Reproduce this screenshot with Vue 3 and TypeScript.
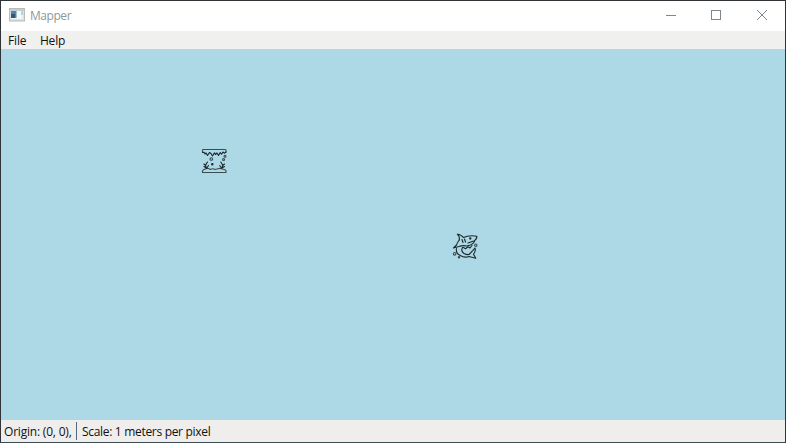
<script setup lang="ts">
import { ref } from 'vue'

interface Marker {
  kind: 'cave' | 'shark'
  x: number
  y: number
}

const menus: string[] = ['File', 'Help']
const origin = ref<[number, number]>([0, 0])
const scale = ref<number>(1)
const markers: Marker[] = [
  { kind: 'cave', x: 200, y: 99 },
  { kind: 'shark', x: 451, y: 184 },
]
</script>

<template>
  <div class="window">
    <header class="titlebar">
      <svg class="app-icon" width="16" height="14" viewBox="0 0 16 14">
        <rect x="0.5" y="0.5" width="15" height="12.5" fill="#dce1e0" stroke="#b4bcbd" />
        <rect x="1" y="1" width="14" height="2" fill="#c5cfd0" />
        <rect x="2" y="3" width="10" height="8" fill="#f5f8f8" />
        <rect x="2" y="3" width="5" height="7" fill="#5684a2" />
        <rect x="2" y="6" width="4" height="4" fill="#31597d" />
        <rect x="7" y="3" width="1" height="7" fill="#9dc2cf" />
        <rect x="12" y="3" width="2" height="4" fill="#b8d4d8" />
        <rect x="12" y="7" width="2" height="4" fill="#edf0ec" />
      </svg>
      <span class="title">Mapper</span>
      <div class="controls">
        <button aria-label="Minimize">
          <svg width="10" height="10" viewBox="0 0 10 10"><path d="M0 5.5H10" /></svg>
        </button>
        <button aria-label="Maximize">
          <svg width="10" height="10" viewBox="0 0 10 10"><rect x=".5" y=".5" width="9" height="9" /></svg>
        </button>
        <button aria-label="Close">
          <svg width="10" height="10" viewBox="0 0 10 10"><path d="M0 0L10 10M10 0L0 10" /></svg>
        </button>
      </div>
    </header>

    <nav class="menubar">
      <span v-for="m in menus" :key="m">{{ m }}</span>
    </nav>

    <main class="map">
      <svg
        v-for="m in markers"
        :key="m.kind"
        class="marker"
        :style="{ left: m.x + 'px', top: m.y + 'px' }"
        width="26"
        height="26"
        viewBox="0 0 26 26"
      >
        <g v-if="m.kind === 'cave'">
          <path d="M1.5 4V2Q1.5 1.5 2.2 1.5H24Q25 1.5 25 2.2V4" class="soft" />
          <path d="M1.5 4.5L3 4.2L4 6L5 5L6.5 7.5L8.5 4.5L10 5.5L11.5 8L13.5 4.8L14.5 6.5L16 5L17.5 7.5L19.2 4.5L20.5 6.2L22 4L23.3 5.2L25 4" />
          <circle cx="10.3" cy="11" r="1.3" class="soft" />
          <circle cx="24" cy="8.2" r="1" class="soft" />
          <circle cx="22.6" cy="11.5" r="1" class="soft" />
          <circle cx="11.3" cy="16.3" r=".7" />
          <path d="M1.5 24.5V23Q2 21.8 4 21Q5.8 20 7.5 20.5L9.5 21.5Q12 20 14 21.5L17 20.8Q19 19.8 21.5 21Q25 21.6 25 23V24.5Z" class="soft" />
          <path d="M5.5 20.5L4.5 17.5L5.5 15.5L6.5 14M4.5 17.5L3 16M5.8 20L7.5 17.5M4.5 19.5L3 18.5M20.8 20.5L21.8 17.5L20.8 15.5L19.8 14M21.8 17.5L23.5 16M20.5 20L18.8 17.5M21.8 19.5L23.5 18.5" />
        </g>
        <g v-else>
          <path d="M7.3 7Q8 3.5 5.3 1.2Q9 1.2 11.3 4.5Q17 2 24.8 3.2Q25.2 6 22.5 7.8L16 10" />
          <path d="M7.3 7Q5.2 9.5 4.5 12L1.5 15L7 13.5Q11 12 14.5 13Q20 12.5 22.5 8.5" />
          <path d="M10 6.5L11 9.5M12.5 6L13.5 9" />
          <circle class="eye" cx="18.3" cy="5.5" r=".6" />
          <path d="M4.5 15.5Q3.5 20.5 8.3 22.5Q12.5 25.2 17 23.5L23.8 25.2L21.5 21.2Q24 18.5 23 15L20.5 17.8L17 21.5" />
          <path d="M10.5 14.5Q8.5 18 12 20.5Q15 22 17 21.5M11.5 14.5L13.5 15.8L16 13.8L18 15L20 12.5" />
          <circle cx="23.8" cy="12.2" r="1.2" class="soft" />
          <circle cx="2.6" cy="20.8" r="1.3" class="soft" />
          <circle cx="7" cy="24.3" r=".7" class="soft" />
        </g>
      </svg>
    </main>

    <footer class="statusbar">
      <span class="origin">Origin: ({{ origin[0] }}, {{ origin[1] }}),</span>
      <span class="divider"></span>
      <span class="scale">Scale: {{ scale }} meters per pixel</span>
    </footer>
  </div>
</template>

<style>
body {
  margin: 0;
}
</style>

<style scoped>
.window {
  box-sizing: border-box;
  width: 786px;
  height: 443px;
  display: flex;
  flex-direction: column;
  border: 1px solid #303438;
  border-bottom-color: #3c4c50;
  background: #fff;
  font-family: 'Segoe UI', 'Open Sans', 'Noto Sans', sans-serif;
  font-size: 12px;
  color: #111;
  overflow: hidden;
  white-space: nowrap;
}
.titlebar {
  height: 30px;
  flex: none;
  display: flex;
  align-items: center;
  padding-left: 8px;
}
.app-icon {
  margin: -2px 5px 0 0;
}
.title {
  margin-top: -1px;
  color: #929899;
  letter-spacing: -0.45px;
}
.controls {
  margin-left: auto;
  display: flex;
  height: 100%;
}
button {
  width: 46px;
  padding: 0;
  border: 0;
  background: none;
  display: flex;
  align-items: center;
  justify-content: center;
}
button:first-child {
  width: 44px;
}
button svg {
  display: block;
  flex: none;
  margin-top: -2px;
  fill: none;
  stroke: #7f8788;
  stroke-width: 1;
}
.menubar {
  height: 18px;
  flex: none;
  display: flex;
  gap: 13.5px;
  padding-left: 7px;
  line-height: 20px;
  background: #f0f0ee;
  letter-spacing: -0.15px;
}
.map {
  position: relative;
  flex: 1;
  background: #add8e5;
}
.marker {
  position: absolute;
  fill: none;
  stroke: #1b272b;
  stroke-width: 1.1;
  stroke-linejoin: round;
  stroke-linecap: round;
}
.soft {
  stroke: #3b4d54;
}
.eye {
  fill: #1b272b;
}
.statusbar {
  height: 22px;
  flex: none;
  display: flex;
  padding-left: 3px;
  line-height: 24px;
  background: #efeeec;
}
.origin {
  width: 72px;
  letter-spacing: -0.2px;
}
.divider {
  width: 1px;
  height: 18px;
  margin: 2px 5px 0 0;
  background: #53687a;
}
.scale {
  letter-spacing: -0.31px;
}
</style>
